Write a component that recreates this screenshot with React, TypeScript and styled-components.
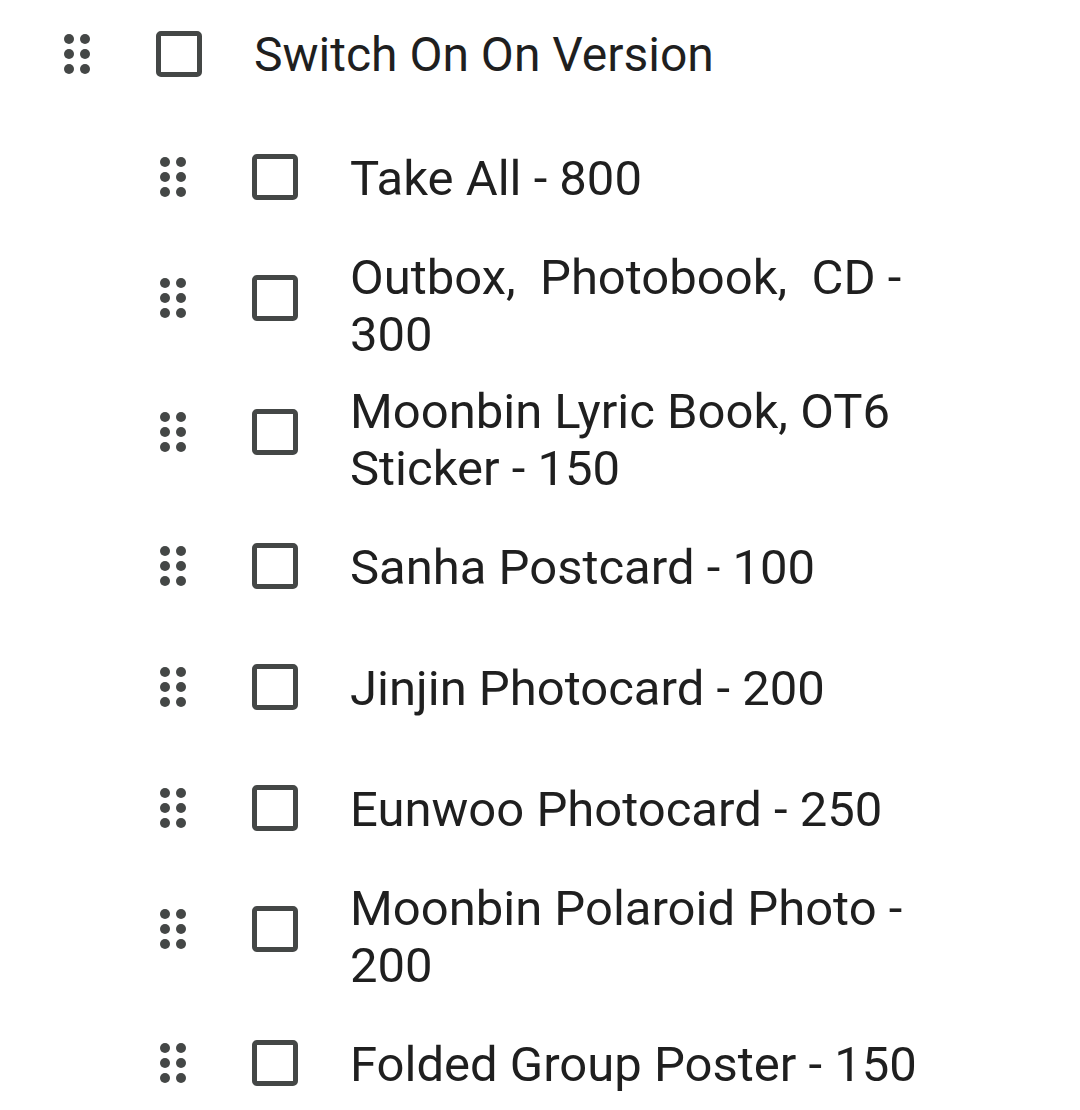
import React from "react";
import styled, { createGlobalStyle } from "styled-components";

const GlobalStyle = createGlobalStyle`
  html, body {
    margin: 0;
    padding: 0;
    background: #ffffff;
  }
  body {
    font-family: Roboto, "Noto Sans", sans-serif;
    color: #1f1f1f;
  }
`;

const ListWrap = styled.div`
  width: 1080px;
  display: flex;
  flex-direction: column;
`;

const ParentRow = styled.div`
  display: flex;
  align-items: center;
  height: 108px;
  padding-left: 64px;
  margin-bottom: 9.5px;
`;

const ChildList = styled.div`
  display: flex;
  flex-direction: column;
  padding-left: 160px;
`;

const ItemRow = styled.div`
  display: flex;
  align-items: flex-start;
  box-sizing: border-box;
  min-height: 121px;
  padding: 10px 0;
`;

const Handles = styled.div<{ $top?: boolean }>`
  display: flex;
  align-items: center;
  height: 46px;
  margin-top: ${(p) => (p.$top ? "0" : "26px")};
  flex-shrink: 0;
`;

const DragHandle = styled.svg`
  width: 26px;
  height: 40px;
  margin-right: 66px;
  display: block;
`;

const Checkbox = styled.div`
  width: 46px;
  height: 46px;
  box-sizing: border-box;
  border: 5px solid #444746;
  border-radius: 5px;
  flex-shrink: 0;
`;

const Label = styled.div<{ $top?: boolean }>`
  margin-left: 52px;
  font-size: ${(p) => (p.$top ? "48px" : "49px")};
  line-height: 57px;
  white-space: pre-wrap;
  color: #1f1f1f;
  align-self: center;
  max-width: ${(p) => (p.$top ? "720px" : "610px")};
`;

const Dots = () => (
  <DragHandle viewBox="0 0 26 40">
    {[5, 20, 35].map((y) =>
      [5, 21].map((x) => (
        <circle key={`${x}-${y}`} cx={x} cy={y} r={5} fill="#444746" />
      ))
    )}
  </DragHandle>
);

const items = [
  "Take All - 800",
  "Outbox,  Photobook,  CD - 300",
  "Moonbin Lyric Book, OT6 Sticker - 150",
  "Sanha Postcard - 100",
  "Jinjin Photocard - 200",
  "Eunwoo Photocard - 250",
  "Moonbin Polaroid Photo - 200",
  "Folded Group Poster - 150",
];

export default function App() {
  return (
    <>
      <GlobalStyle />
      <ListWrap>
        <ParentRow>
          <Handles $top>
            <Dots />
            <Checkbox role="checkbox" aria-checked="false" />
          </Handles>
          <Label $top>Switch On On Version</Label>
        </ParentRow>
        <ChildList>
          {items.map((text) => (
            <ItemRow key={text}>
              <Handles>
                <Dots />
                <Checkbox role="checkbox" aria-checked="false" />
              </Handles>
              <Label>{text}</Label>
            </ItemRow>
          ))}
        </ChildList>
      </ListWrap>
    </>
  );
}
